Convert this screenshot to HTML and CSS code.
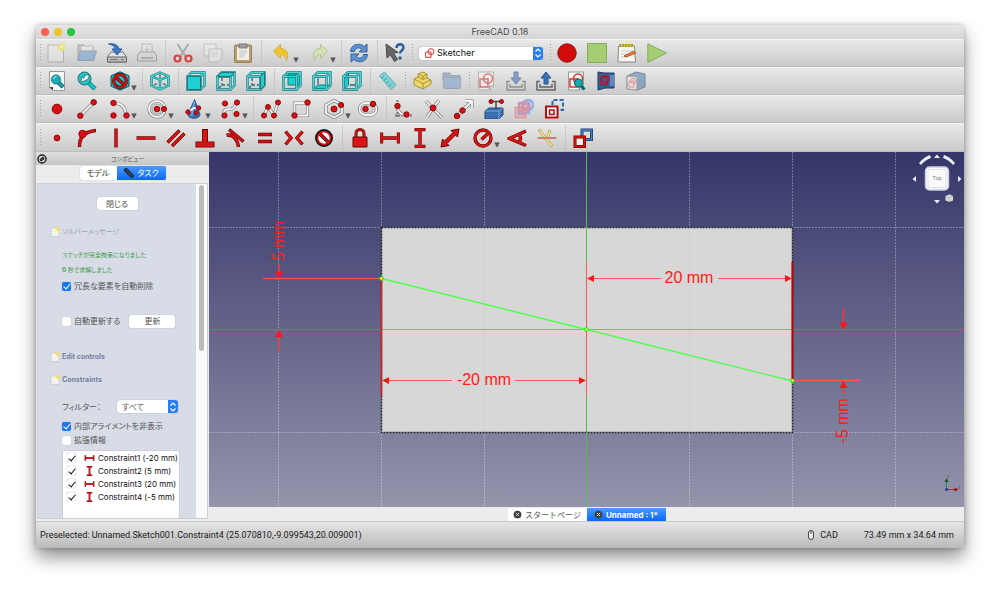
FILE: index.html
```html
<!DOCTYPE html>
<html lang="ja">
<head>
<meta charset="utf-8">
<title>FreeCAD 0.18</title>
<link rel="stylesheet" href="styles.css">
</head>
<body>
<svg class="defs" aria-hidden="true">
  <symbol id="frame" viewBox="0 0 20 20"><path class="wd" d="M1.500 5.500h13v13h-13zM1.500 5.500l4-4h13v13l-4 4M14.500 5.500l4-4"/><path class="wt" d="M1.500 5.500h13v13h-13zM1.500 5.500l4-4h13v13l-4 4M14.500 5.500l4-4"/></symbol>
  <symbol id="back" viewBox="0 0 20 20"><path class="dk" d="M6 7v3M6 12v2h3M11 14h2M3 17l2-2"/></symbol>
  <symbol id="page" viewBox="0 0 20 20"><path d="M2.500 1h15v14l-4 4h-11z" fill="#f6f6f4" stroke="#999"/><path d="M17.500 15h-4v4" fill="#ccc" stroke="#888"/></symbol>
  <symbol id="shape" viewBox="0 0 20 20"><path d="M4 8h8v8H4z" fill="none" stroke="#d33" stroke-width="1.500"/><circle cx="12" cy="7.500" r="4.500" fill="none" stroke="#d33" stroke-width="1.500"/></symbol>
  <symbol id="note" viewBox="0 0 10 10"><path d="M1 1h8v8.500H1z" fill="#f4f4ee" stroke="#c5c5bd" stroke-width=".7"/><circle cx="7.500" cy="2" r="1.900" fill="#f7e35a"/></symbol>
  <symbol id="hdim" viewBox="0 0 20 20"><path d="M1.500 4.500v11M18.500 4.500v11M2 10h16" stroke="#6b0505" stroke-width="3.400" fill="none"/><path d="M1.500 5v10M18.500 5v10M2 10h16" stroke="#d81414" stroke-width="2.200" fill="none"/></symbol>
  <symbol id="vdim" viewBox="0 0 20 20"><path d="M4.500 1.500h11M4.500 18.500h11M10 2v16" stroke="#6b0505" stroke-width="3.400" fill="none"/><path d="M5 1.500h10M5 18.500h10M10 2v16" stroke="#d81414" stroke-width="2.200" fill="none"/></symbol>
  <symbol id="updown" viewBox="0 0 10 12"><path d="M2.500 4.500L5 2l2.500 2.500M2.500 7.500L5 10l2.500-2.500" fill="none" stroke="#fff" stroke-width="1.200"/></symbol>
  <symbol id="close" viewBox="0 0 10 10"><circle cx="5" cy="5" r="4.300" fill="#3f3f3f"/><path d="M3.200 3.200l3.600 3.600M6.800 3.200L3.200 6.800" stroke="#ddd" stroke-width="1.100"/></symbol>
</svg>

<div class="window">
  <header class="titlebar">
    <div class="lights"><button class="light red" aria-label="Close"></button><button class="light yellow" aria-label="Minimize"></button><button class="light green" aria-label="Zoom"></button></div>
    <h1>FreeCAD 0.18</h1>
  </header>

  <div class="toolbar" role="toolbar" aria-label="File">
    <i class="grip first"></i>
    <button class="tool off" aria-label="New"><svg viewBox="0 0 20 20"><path d="M1 2h15.500v17H1z" fill="#eee" stroke="#777"/><circle cx="14.500" cy="4" r="4" fill="#f8e000"/><circle cx="14.500" cy="4" r="1.500" fill="#fff"/></svg></button>
    <button class="tool off" aria-label="Open"><svg viewBox="0 0 20 20"><path d="M1 17V2h6l1 2h8v9" fill="#999" stroke="#555"/><path d="M4 3h12v9H4z" fill="#eee" stroke="#888"/><path d="M3.500 8h16l-3 9.500H1z" fill="#4683cb" stroke="#2d568e"/></svg></button>
    <button class="tool" aria-label="Save"><svg viewBox="0 0 20 20"><path d="M4 9h12l3.500 5v5H.5v-5z" fill="#e2e2e2" stroke="#777"/><path d="M.5 14h19v5H.5z" fill="#bdbdbd" stroke="#666"/><path d="M3 16.500h8M14 16.500h3" stroke="#777"/><path d="M1.500 1c7-1 10 2 10.500 5h3l-5 6-5-6h3c0-2-2-4-6.500-5z" fill="#3d7cc5" stroke="#2f5f9d"/></svg></button>
    <button class="tool off" aria-label="Print"><svg viewBox="0 0 20 20"><path d="M5 1h10v9H5z" fill="#eee" stroke="#777"/><path d="M10 3v5M7.500 6l2.500 2 2.500-2" stroke="#777" fill="none"/><path d="M3 9h14l2.500 3v6H.5v-6z" fill="#d0d0d0" stroke="#555"/><path d="M4 14h12v2H4z" fill="#777"/></svg></button>
    <i class="sep"></i>
    <button class="tool soft" aria-label="Cut"><svg viewBox="0 0 20 20"><path d="M4.500 1l8.500 13M15.500 1L7 14" stroke="#999" stroke-width="2"/><circle cx="4.500" cy="15.500" r="3" fill="none" stroke="#d11" stroke-width="2.200"/><circle cx="15.500" cy="15.500" r="3" fill="none" stroke="#d11" stroke-width="2.200"/></svg></button>
    <button class="tool off" aria-label="Copy"><svg viewBox="0 0 20 20"><path d="M1 1h12v12H1z" fill="#eee" stroke="#999"/><path d="M6 6h13v9l-4 4H6z" fill="#f5f5f5" stroke="#888"/><path d="M8 9h8M8 11h8M8 13h6" stroke="#bbb"/></svg></button>
    <button class="tool soft" aria-label="Paste"><svg viewBox="0 0 20 20"><rect x="1.500" y="2" width="17" height="17.500" rx="1" fill="#b08a45" stroke="#806536"/><path d="M4 4h12v13H4z" fill="#f8f8f6"/><path d="M6 1h8v4H6z" fill="#888" stroke="#555"/><path d="M6 8h8M6 10h8M6 12h6M6 14h5" stroke="#bbb"/></svg></button>
    <i class="sep"></i>
    <button class="tool menu" aria-label="Undo"><svg viewBox="0 0 20 20"><path d="M1.500 8l7-6.500v4c6 0 9 5 6 12-1-4-3-6-6-6v4z" fill="#edc52e" stroke="#d5b13a"/></svg><b>▼</b></button>
    <button class="tool menu" aria-label="Redo"><svg class="dim" viewBox="0 0 20 20"><path d="M18.500 8l-7-6.500v4c-6 0-9 5-6 12 1-4 3-6 6-6v4z" fill="#d5e59b" stroke="#96b35e"/></svg><b>▼</b></button>
    <i class="sep"></i>
    <button class="tool" aria-label="Refresh"><svg viewBox="0 0 20 20"><path d="M1.500 8.500C2 0 12 0 15 3.500L18 1v8h-8l2.500-2.500C10 3.500 6 5 5.500 8.500zM18.500 11.500C18 20 8 20 5 16.500L2 19v-8h8l-2.500 2.500C10 16.500 14 15 14.500 11.500z" fill="#5c91cf" stroke="#3463a0"/></svg></button>
    <i class="sep"></i>
    <button class="tool" aria-label="What's this?"><svg viewBox="0 0 20 20"><path d="M1 1l12 8.500-4.500.5 4 6.500-3 2-4-6.500L2 15z" fill="#666" stroke="#4a4a4a"/><path d="M11.500 5c0-5 7-5 7-.5 0 3-3.500 3-3.500 6" fill="none" stroke="#2f5b9b" stroke-width="2.400"/><circle cx="15" cy="15" r="1.700" fill="#2f5b9b"/></svg></button>
    <i class="grip"></i>
    <label class="combo workbench"><svg class="lead" viewBox="3 2 15 15"><use href="#shape" width="20" height="20"/></svg><select aria-label="Workbench"><option>Sketcher</option></select><span class="knob"><svg viewBox="0 0 10 12"><use href="#updown"/></svg></span></label>
    <i class="grip"></i>
    <button class="tool" aria-label="Record macro"><svg viewBox="0 0 20 20"><circle cx="10" cy="10" r="9.200" fill="#d40b0b" stroke="#8c0d0d"/></svg></button>
    <button class="tool" aria-label="Stop macro"><svg viewBox="0 0 20 20"><path d="M.5.500h19v19H.5z" fill="#a3cf72" stroke="#86ab5f"/></svg></button>
    <button class="tool" aria-label="Edit macro"><svg viewBox="0 0 20 20"><path d="M1.500 3h16l1 16H1z" fill="#f4f4f0" stroke="#888"/><path d="M2.500 1h14v3h-14z" fill="#e2c23a"/><path d="M3 1v3M6 1v3M9 1v3M12 1v3M15 1v3" stroke="#776"/><path d="M4 8h11M4 11h9M4 14h5" stroke="#ccc"/><path d="M7 13l10-5 2 2-10 4z" fill="#e68a24" stroke="#b4533a"/></svg></button>
    <button class="tool" aria-label="Run macro"><svg viewBox="0 0 20 20"><path d="M.8.800L19.500 10 .8 19.200z" fill="#a3cf72" stroke="#86ab5f"/></svg></button>
  </div>

  <div class="toolbar" role="toolbar" aria-label="View">
    <i class="grip first"></i>
    <button class="tool" aria-label="Fit all"><svg viewBox="0 0 20 20"><path d="M2.500.500h15v19h-11l-4-4z" fill="#f7f7f7" stroke="#999"/><path d="M2 16h4v3.500z" fill="#444"/><path d="M11 11l5 5" stroke="#045" stroke-width="4"/><path d="M11 11l5 5" stroke="#12a9af" stroke-width="2.500"/><circle cx="9" cy="8.500" r="4.500" fill="#19aeb4" stroke="#177c80"/><path d="M6.500 8a3 3 0 013-2.500" fill="none" stroke="#bff"/></svg></button>
    <button class="tool" aria-label="Fit selection"><svg viewBox="0 0 20 20"><path d="M11 11l7 7" stroke="#0b6f75" stroke-width="4.500"/><path d="M11 11l7 7" stroke="#17c5c9" stroke-width="3"/><circle cx="7.500" cy="7.500" r="6.500" fill="#2bbcc0" stroke="#16777b"/><path d="M4 11l1-5 1.500 1.500L9 4l3 0-1 4-2 1z" fill="#fff" stroke="#355" stroke-width=".6"/></svg></button>
    <button class="tool menu" aria-label="Draw style"><svg viewBox="0 0 20 20"><path d="M10 .8l9 4v10.400l-9 4-9-4V4.800z" fill="#1cc3c6" stroke="#0b5356"/><circle cx="10" cy="10" r="6.300" fill="none" stroke="#400" stroke-width="3.200"/><path d="M5.500 6l9 8" stroke="#400" stroke-width="3.200"/><circle cx="10" cy="10" r="6.300" fill="none" stroke="#d61212" stroke-width="2"/><path d="M5.500 6l9 8" stroke="#d61212" stroke-width="2"/></svg><b>▼</b></button>
    <i class="sep"></i>
    <button class="tool" aria-label="Isometric"><svg viewBox="0 0 20 20"><path class="wd" d="M10 1.500l8.500 3.700v9.600L10 18.500l-8.500-3.700V5.200zM1.500 5.200L10 9l8.500-3.800M10 9v9.500"/><path class="wt" d="M10 1.500l8.500 3.700v9.600L10 18.500l-8.500-3.700V5.200zM1.500 5.200L10 9l8.500-3.800M10 9v9.500"/><path class="dk" d="M10 3v4M4 14l3-1.500M16 14l-3-1.500"/></svg></button>
    <i class="sep"></i>
    <button class="tool" aria-label="Front"><svg viewBox="0 0 20 20"><use href="#frame"/><path class="face" d="M1.500 5.500h13v13h-13z"/></svg></button>
    <button class="tool" aria-label="Top"><svg viewBox="0 0 20 20"><use href="#back"/><use href="#frame"/><path class="face" d="M1.500 5.500l4-4h13l-4 4z"/></svg></button>
    <button class="tool" aria-label="Right"><svg viewBox="0 0 20 20"><use href="#back"/><use href="#frame"/><path class="face" d="M14.500 5.500l4-4v13l-4 4z"/></svg></button>
    <i class="sep"></i>
    <button class="tool" aria-label="Rear"><svg viewBox="0 0 20 20"><path class="face" d="M6 3h12v11H6z"/><use href="#frame"/></svg></button>
    <button class="tool" aria-label="Bottom"><svg viewBox="0 0 20 20"><path class="face" d="M1.500 18.500l4-4.500h13l-4 4.500z"/><path class="dk" d="M6 7v6"/><use href="#frame"/></svg></button>
    <button class="tool" aria-label="Left"><svg viewBox="0 0 20 20"><path class="face" d="M1.500 5.500l5-4v12.500l-5 4.500z"/><path class="dk" d="M8 14h5"/><use href="#frame"/></svg></button>
    <i class="sep"></i>
    <button class="tool" aria-label="Measure"><svg viewBox="0 0 20 20"><path d="M1.500 5l5-4L18 14l-5 4.500z" fill="#79d3d6" stroke="#5aaeb1"/><path d="M4 7l2-1.500M6 9.500L8.500 7.500M8.500 12l2-1.500M11 15l2.500-2" stroke="#4a9699"/></svg></button>
    <i class="grip"></i>
    <button class="tool" aria-label="Part"><svg viewBox="0 0 20 20"><path d="M2 8l4-2V3l5-2 4 2v4l4 2v4l-8 5-9-4z" fill="#ecd968" stroke="#a8933a"/><path d="M6 6l5 2.500 4-2M2 8l9 4.500 8-3.500M11 12.500V18M6 3l5 2.500 4-2.500M11 5.500v3" fill="none" stroke="#a8933a"/></svg></button>
    <button class="tool" aria-label="Group"><svg class="dim" viewBox="0 0 20 20"><path d="M1 2h7l1 2.500h9V9H1z" fill="#8195b0" stroke="#6d7f99"/><path d="M1 6.500h18l-1 11H2z" fill="#7fa3cf" stroke="#7087a5"/></svg></button>
    <i class="grip"></i>
    <button class="tool" aria-label="New sketch"><svg class="dim" viewBox="0 0 20 20"><use href="#page"/><use href="#shape"/></svg></button>
    <button class="tool" aria-label="Edit sketch"><svg class="dim" viewBox="0 0 20 20"><path d="M4 10.500H1v8.500h18v-8.500h-3M4 13v3h12v-3" fill="none" stroke="#666" stroke-width="1.500"/><path d="M8 1h4v6h3l-5 6-5-6h3z" fill="#3f74b5" stroke="#264f85"/></svg></button>
    <button class="tool" aria-label="Leave sketch"><svg viewBox="0 0 20 20"><path d="M4 10.500H1v8.500h18v-8.500h-3M4 13v3h12v-3" fill="none" stroke="#666" stroke-width="1.500"/><path d="M8 13h4V7h3l-5-6-5 6h3z" fill="#3b73b8" stroke="#2b548c"/></svg></button>
    <button class="tool" aria-label="View sketch"><svg viewBox="0 0 20 20"><use href="#page"/><use href="#shape"/><path d="M14 14l4.500 4.500" stroke="#066" stroke-width="3"/><circle cx="12.500" cy="12" r="4" fill="#18aab0" stroke="#066"/></svg></button>
    <button class="tool" aria-label="View section"><svg viewBox="0 0 20 20"><path d="M2 1l6 1h10v15H9l-7 2z" fill="#35629f" stroke="#1b375f"/><path d="M14 4h4v11h-4z" fill="#5b88c3"/><path d="M5 6h6v8H5z" fill="none" stroke="#b31528" stroke-width="1.300"/><circle cx="9.500" cy="8" r="3.500" fill="none" stroke="#b31528" stroke-width="1.300"/></svg></button>
    <button class="tool" aria-label="Map sketch"><svg class="dim" viewBox="0 0 20 20"><path d="M1 5l9-4 9 2v13l-8 3-10-1z" fill="#5a85bd" stroke="#355"/><path d="M1 5l10 1v13l-10-1z" fill="#f0e9e9" stroke="#777"/><path d="M3 10h5v6H3z" fill="none" stroke="#d66"/><circle cx="7" cy="10" r="2.500" fill="none" stroke="#d66"/></svg></button>
  </div>

  <div class="toolbar" role="toolbar" aria-label="Sketch geometry">
    <i class="grip first"></i>
    <button class="tool" aria-label="Point"><svg viewBox="0 0 20 20"><circle class="ball" cx="10" cy="10" r="4.800"/></svg></button>
    <button class="tool" aria-label="Line"><svg viewBox="0 0 20 20"><path class="o" d="M3 17L17 3"/><path class="n" d="M3 17L17 3"/><circle class="ball" cx="3.300" cy="16.700" r="2.700"/><circle class="ball" cx="16.700" cy="3.300" r="2.700"/></svg></button>
    <button class="tool menu" aria-label="Arc"><svg viewBox="0 0 20 20"><path class="o" d="M4 4q11 0 12 12"/><path class="n" d="M4 4q11 0 12 12"/><circle class="ball" cx="3.500" cy="4" r="2.700"/><circle class="ball" cx="3.500" cy="16.500" r="2.700"/><circle class="ball" cx="16.500" cy="16.500" r="2.700"/></svg><b>▼</b></button>
    <button class="tool menu" aria-label="Circle"><svg viewBox="0 0 20 20"><circle class="o" cx="10" cy="10" r="8"/><circle class="n" cx="10" cy="10" r="8"/><circle cx="10" cy="10" r="5" fill="none" stroke="#888" stroke-width=".7"/><circle class="ball" cx="10" cy="10" r="2.800"/><circle class="ball" cx="17" cy="10" r="2.500"/></svg><b>▼</b></button>
    <button class="tool menu" aria-label="Conic"><svg viewBox="0 0 20 20"><path d="M10.500 .5l5.500 15c0 5-12 5-12 0z" fill="#3c6dae" stroke="#2d5288"/><path d="M10.500 2l-3 15" stroke="#7fa8dc" stroke-width="1.500"/><path d="M5 13q5-6 9-3" fill="none" stroke="#eee" stroke-width="2"/><circle class="ball" cx="4" cy="13" r="2.200"/><circle class="ball" cx="14.500" cy="9" r="2.200"/><circle class="ball" cx="12" cy="14" r="1.800"/></svg><b>▼</b></button>
    <button class="tool menu" aria-label="B-spline"><svg viewBox="0 0 20 20"><path class="o" d="M3 16C2 8 8 11 11 10s3-5 5-6"/><path class="n" d="M3 16C2 8 8 11 11 10s3-5 5-6"/><circle class="ball" cx="4" cy="4.500" r="2.600"/><circle class="ball" cx="16" cy="3.500" r="2.600"/><circle class="ball" cx="3.500" cy="16.500" r="2.600"/><circle class="ball" cx="15.500" cy="15" r="2.600"/></svg><b>▼</b></button>
    <i class="sep"></i>
    <button class="tool" aria-label="Polyline"><svg viewBox="0 0 20 20"><path class="o" d="M3 16l4-8 6 8 4-12"/><path class="n" d="M3 16l4-8 6 8 4-12"/><circle class="ball" cx="3" cy="16.500" r="2.500"/><circle class="ball" cx="7" cy="8" r="2.500"/><circle class="ball" cx="13" cy="16.500" r="2.500"/><circle class="ball" cx="17" cy="3.500" r="2.500"/></svg></button>
    <button class="tool" aria-label="Rectangle"><svg viewBox="0 0 20 20"><path class="o" d="M3.500 4h13v12.500h-13z"/><path class="n" d="M3.500 4h13v12.500h-13z"/><circle class="ball" cx="3.500" cy="16.500" r="2.700"/><circle class="ball" cx="16.500" cy="3.500" r="2.700"/></svg></button>
    <button class="tool menu" aria-label="Polygon"><svg viewBox="0 0 20 20"><path class="o" d="M10 1.500l8 4.500v8l-8 4.500L2 14V6z"/><path class="n" d="M10 1.500l8 4.500v8l-8 4.500L2 14V6z"/><circle class="ball" cx="10" cy="10" r="3"/><circle class="ball" cx="17" cy="6" r="2.600"/></svg><b>▼</b></button>
    <button class="tool" aria-label="Slot"><svg viewBox="0 0 20 20"><rect class="o" x="1.500" y="4" width="17" height="12" rx="6"/><rect class="n" x="1.500" y="4" width="17" height="12" rx="6"/><rect x="5" y="7" width="10" height="6" rx="3" fill="none" stroke="#999" stroke-width=".7"/><circle class="ball" cx="7.500" cy="10" r="2.700"/><circle class="ball" cx="15" cy="5" r="2.700"/></svg></button>
    <i class="sep"></i>
    <button class="tool" aria-label="Fillet"><svg viewBox="0 0 20 20"><path d="M3.500 1v18M1 16.500h18" stroke="#777" stroke-width="2" stroke-dasharray="2 1"/><path class="o" d="M3.500 8q1 8 9 8"/><path class="n" d="M3.500 8q1 8 9 8"/><circle class="ball" cx="3.500" cy="7" r="2.700"/><circle class="ball" cx="12.500" cy="15.500" r="2.700"/></svg></button>
    <button class="tool" aria-label="Trim"><svg viewBox="0 0 20 20"><path class="o" d="M2 2l16 17M15 1L3 18"/><path class="n" d="M2 2l16 17M15 1L3 18"/><circle class="ball" cx="9" cy="9" r="2.900"/></svg></button>
    <button class="tool" aria-label="Extend"><svg viewBox="0 0 20 20"><path class="o" d="M3 17L18 2M11 2h7v7"/><path class="n" d="M3 17L18 2M11 2h7v7"/><circle class="ball" cx="3" cy="17" r="2.700"/><circle class="ball" cx="8.500" cy="11.500" r="2.700"/></svg></button>
    <button class="tool" aria-label="External geometry"><svg viewBox="0 0 20 20"><path d="M1 12l4-3h14v7l-4 4H1z" fill="#3a6eb0" stroke="#234673"/><path d="M1 12h14v8M15 12l4-3" fill="none" stroke="#7aa4d6"/><path d="M12 2v8M7 2.500h10" stroke="#444" stroke-width="1.500"/><circle class="ball" cx="7" cy="2.500" r="2"/><circle class="ball" cx="17.500" cy="2.500" r="2"/></svg></button>
    <button class="tool" aria-label="Carbon copy"><svg viewBox="0 0 20 20"><g fill="none" stroke="#8db0ef" stroke-width="2.500"><path d="M5 4h10v10H5z"/><circle cx="14" cy="6" r="5"/></g><g fill="none" stroke="#e18e96" stroke-width="1.500"><path d="M1.500 8.500h10v10h-10z"/><path d="M4 11h5v5H4z"/><circle cx="10.500" cy="8" r="5.500"/><circle cx="10.500" cy="8" r="2.800"/></g></svg></button>
    <button class="tool" aria-label="Construction mode"><svg viewBox="0 0 20 20"><path d="M8.500 6V1h10.500v10h-5" fill="none" stroke="#2f68b0" stroke-width="2" stroke-dasharray="4 2"/><path d="M2 7.500h11.500v11H2z" fill="#fff" stroke="#b01010" stroke-width="2"/><path d="M5.500 11h4.500v4.500H5.500z" fill="#eee" stroke="#b01010" stroke-width="1.500"/></svg></button>
  </div>

  <div class="toolbar last" role="toolbar" aria-label="Sketch constraints">
    <i class="grip first"></i>
    <div class="tools wide">
    <button class="tool" aria-label="Coincident"><svg viewBox="0 0 20 20"><circle class="ball" cx="10" cy="10" r="2.900"/></svg></button>
    <button class="tool" aria-label="Point on object"><svg viewBox="0 0 20 20"><path class="rd" d="M2.500 19Q2 4 19 2.500"/><path class="rr" d="M2.500 18.500Q2 4 18.500 2.500"/><circle class="ball" cx="5.500" cy="6" r="3.700"/></svg></button>
    <button class="tool" aria-label="Vertical"><svg viewBox="0 0 20 20"><path class="rd" d="M10 .5v19"/><path class="rr" d="M10 1v18"/></svg></button>
    <button class="tool" aria-label="Horizontal"><svg viewBox="0 0 20 20"><path class="rd" d="M.5 10h19"/><path class="rr" d="M1 10h18"/></svg></button>
    <button class="tool" aria-label="Parallel"><svg viewBox="0 0 20 20"><path class="rd" d="M1.500 14.500l12-12M6 18L18.500 5.500"/><path class="rr" d="M2 14l11-11M6.500 17.500L18 6"/></svg></button>
    <button class="tool" aria-label="Perpendicular"><svg viewBox="0 0 20 20"><path class="th" d="M10 1v15M.5 16.500h19"/><path class="ti" d="M10 2v14M1.500 16.500h17"/></svg></button>
    <button class="tool" aria-label="Tangent"><svg viewBox="0 0 20 20"><path class="rd" d="M4 1.500l14.500 12M1.500 7q10-1 12 12"/><path class="rr" d="M4.500 2l13.500 11M2 7q9-1 11.500 11.500"/></svg></button>
    <button class="tool" aria-label="Equal"><svg viewBox="0 0 20 20"><path class="rd" d="M3 6.500h14M3 13.500h14"/><path class="rr" d="M3.500 6.500h13M3.500 13.500h13"/></svg></button>
    <button class="tool" aria-label="Symmetric"><svg viewBox="0 0 20 20"><path class="rd" d="M1.500 3.500L7 10l-5.500 6.500M18.500 3.500L13 10l5.500 6.500"/><path class="rr" d="M2 4l5 6-5 6M18 4l-5 6 5 6"/></svg></button>
    <button class="tool" aria-label="Block"><svg viewBox="0 0 20 20"><circle cx="10" cy="10" r="7.500" fill="#fff" stroke="#111" stroke-width="3"/><path d="M5 5l10 10" stroke="#111" stroke-width="3.500"/><circle cx="10" cy="10" r="6.500" fill="none" stroke="#d11" stroke-width="1.600"/><path d="M5.500 5.500l9 9" stroke="#d11" stroke-width="2"/></svg></button>
    </div>
    <i class="sep"></i>
    <button class="tool" aria-label="Lock"><svg viewBox="0 0 20 20"><path d="M6 10V5.500a4 4 0 018 0V10" fill="none" stroke="#6b0505" stroke-width="3"/><path d="M6 10V5.500a4 4 0 018 0V10" fill="none" stroke="#c11" stroke-width="1.700"/><path d="M3 9h14v10H3z" fill="#d81414" stroke="#6b0505"/></svg></button>
    <button class="tool" aria-label="Horizontal distance"><svg viewBox="0 0 20 20"><use href="#hdim"/></svg></button>
    <button class="tool" aria-label="Vertical distance"><svg viewBox="0 0 20 20"><use href="#vdim"/></svg></button>
    <button class="tool" aria-label="Distance"><svg viewBox="0 0 20 20"><path d="M1 19l1.500-8 2 2L13 4.500l-2-2 8-1.500-1.500 8-2-2L7 15.500l2 2z" fill="#d81414" stroke="#6b0505"/></svg></button>
    <button class="tool menu" aria-label="Radius"><svg viewBox="0 0 20 20"><circle class="rd" cx="10" cy="10" r="8"/><circle class="rr" cx="10" cy="10" r="8"/><path class="rd" d="M8.500 11.500L14.500 6"/><path class="rr" d="M8.500 11.500L14.500 6"/></svg><b>▼</b></button>
    <button class="tool" aria-label="Angle"><svg viewBox="0 0 20 20"><path class="rd" d="M19 3L2.500 10.500 19 17.500M12 6.500q3 4 0 7.500"/><path class="rr" d="M18.500 3L2.500 10.500l16 6.500M12 6.500q3 4 0 7.500"/></svg></button>
    <button class="tool" aria-label="Snell's law"><svg viewBox="0 0 20 20"><path d="M2 1.500L15 18.500M10 11l3-9" stroke="#b3a561" stroke-width="3" fill="none"/><path d="M2.500 2L14.500 18M10 11l3-8.500" stroke="#eee08c" stroke-width="1.800" fill="none"/><path d="M.5 10h19" stroke="#c96262" stroke-width="1.500"/></svg></button>
    <i class="sep"></i>
    <button class="tool" aria-label="Toggle reference"><svg viewBox="0 0 20 20"><path d="M9 2h9.500v9.500H9z" fill="none" stroke="#173e70" stroke-width="3"/><path d="M9 2h9.500v9.500H9z" fill="none" stroke="#4b7fc0" stroke-width="1.500"/><path d="M2 9h9.500v9.500H2z" fill="#eee" stroke="#700" stroke-width="3"/><path d="M2 9h9.500v9.500H2z" fill="none" stroke="#d81414" stroke-width="1.700"/></svg></button>
  </div>

  <main class="work">
    <aside class="dock">
      <div class="dock-title"><button class="plain" aria-label="Close panel"><svg viewBox="0 0 10 10"><circle cx="5" cy="5" r="4" fill="#ddd" stroke="#222" stroke-width="1.500"/><path d="M3 5.500l3-2.500 1 2-3 2z" fill="#555" stroke="#111"/></svg></button><span>コンボビュー</span></div>
      <div class="tabs" role="tablist"><button role="tab">モデル</button><button role="tab" class="active" aria-selected="true"><svg viewBox="0 0 12 10"><path d="M1.500 1L4 .5l6.500 7-.5 1.500-2 .5L1.500 3z" fill="#34404e" stroke="#18232f"/></svg>タスク</button></div>
      <div class="frame">
        <div class="task">
          <button class="btn closebtn">閉じる</button>
          <h2 class="jp"><svg viewBox="0 0 10 10"><use href="#note"/></svg>ソルバーメッセージ</h2>
          <p class="msg">スケッチが完全拘束になりました</p>
          <p class="msg second"><b>0</b> 秒で求解しました</p>
          <label class="check"><input type="checkbox" checked>冗長な要素を自動削除</label>
          <div class="update"><label class="check"><input type="checkbox">自動更新する</label><button class="btn">更新</button></div>
          <h2><svg viewBox="0 0 10 10"><use href="#note"/></svg>Edit controls</h2>
          <h2 class="con"><svg viewBox="0 0 10 10"><use href="#note"/></svg>Constraints</h2>
          <div class="filter"><label for="filter">フィルター：</label><span class="combo"><select id="filter"><option>すべて</option></select><span class="knob"><svg viewBox="0 0 10 12"><use href="#updown"/></svg></span></span></div>
          <label class="check"><input type="checkbox" checked>内部アライメントを非表示</label>
          <label class="check"><input type="checkbox">拡張情報</label>
          <ul class="list">
            <li><label><input type="checkbox" checked><svg viewBox="0 0 20 20"><use href="#hdim"/></svg>Constraint1 (-20 mm)</label></li>
            <li><label><input type="checkbox" checked><svg viewBox="0 0 20 20"><use href="#vdim"/></svg>Constraint2 (5 mm)</label></li>
            <li><label><input type="checkbox" checked><svg viewBox="0 0 20 20"><use href="#hdim"/></svg>Constraint3 (20 mm)</label></li>
            <li><label><input type="checkbox" checked><svg viewBox="0 0 20 20"><use href="#vdim"/></svg>Constraint4 (-5 mm)</label></li>
          </ul>
        </div>
        <div class="scroll"><i></i></div>
      </div>
    </aside>

    <section class="viewer">
      <div class="scene">
      <svg viewBox="209 152 755 355" preserveAspectRatio="xMidYMid slice" role="img" aria-label="Sketch view">
        <path class="grid" d="M278.500 152v355M381.500 152v355M484.500 152v355M689.500 152v355M792.500 152v355M895.500 152v355M209 227.500h755M209 432.500h755"/>
        <path d="M381.500 227.500h411v205h-411z" fill="#d7d7d7"/>
        <path class="grid in" d="M484.500 228v204M689.500 228v204"/>
        <path class="edge" d="M381.500 227.500h411v205h-411z"/>
        <path d="M586.500 152v355" stroke="#4cc04c"/>
        <path d="M209 329.500h172M793 329.500h171" stroke="#c0566c"/>
        <path d="M382 329.500h410" stroke="#f47c7c"/>
        <path d="M586.500 262v134M263 278.500h118M792 380.500h68" stroke="#f55"/>
        <path d="M381.500 279v117" stroke="#e02020" stroke-width="1.500"/>
        <path d="M792.500 262v118" stroke="#b00a0a" stroke-width="2"/>
        <path d="M588 278.500h73M718 278.500h73M383 380.500h69M515 380.500h70" stroke="#f55"/>
        <path d="M279 264v14M279 331v21M843.500 308v20M843.500 382v12" stroke="#f33" stroke-width="1.500"/>
        <path class="arrow" d="M587 278.500l7-3.500v7zM792 278.500l-7-3.500v7zM382 380.500l7-3.500v7zM586 380.500l-7-3.500v7zM279 278.500l-4-7h8zM279 330l-4 7h8zM843.500 329.500l-4-7h8zM843.500 381l-4 7h8z"/>
        <path d="M381.500 278.500L586.500 329.500 792.500 381" fill="none" stroke="#4bff4b" stroke-width="1.300"/>
        <g fill="#22dd22"><circle cx="381.500" cy="278.500" r="2.300"/><circle cx="586.500" cy="329.500" r="2.300"/><circle cx="792.500" cy="381" r="2.300"/></g>
        <g fill="#ff3"><circle cx="381.500" cy="278.500" r="1.200"/><circle cx="586.500" cy="329.500" r="1.200"/><circle cx="792.500" cy="380.500" r="1.200"/></g>
        <g class="dims"><text x="689" y="283">20 mm</text><text x="484" y="385">-20 mm</text><text transform="translate(284 241) rotate(-90)">5 mm</text><text transform="translate(848 421) rotate(-90)">-5 mm</text></g>
        <g fill="#e8edf4">
          <path d="M919 163q5-6 11-8l1 3q-6 2-10 7zM955 163q-5-6-11-8l-1 3q6 2 10 7z"/>
          <path d="M934 158l3-3.500 3 3.500zM934 200l3 3.500 3-3.500zM916 176v6l-3.500-3zM958 176v6l3.500-3z"/>
        </g>
        <rect x="925.500" y="167" width="23" height="23" rx="4" fill="#fafafa" stroke="#c9d0e4" stroke-width="1.500"/>
        <path d="M928 169.500h18v18h-18z" fill="none" stroke="#ccd" stroke-dasharray="1 1"/>
        <text class="top" x="937" y="180">Top</text>
        <path d="M945.500 196l4-1.800 3.500 1.800v4.500l-3.500 1.500-4-1.500z" fill="#d8d8d4"/><path d="M945.500 196l4 1.500 3.500-1.500M949.500 197.500v4.500" fill="none" stroke="#aaa" stroke-width=".6"/><path d="M955 196h3l-1.500 2z" fill="#444"/>
        <path d="M946.500 489v-10" stroke="#228a3b"/><path d="M944.500 482l2-4 2 4z" fill="#145a28"/><path d="M946.500 489.500h10" stroke="#a33"/><path d="M954.500 487.500l4 2-4 2z" fill="#911"/><circle cx="946.500" cy="489.500" r="1.500" fill="#113a99"/><text class="axis" x="947" y="478">y</text><text class="axis" x="958" y="489">x</text>
      </svg>
      </div>
      <div class="docs" role="tablist"><button role="tab"><svg viewBox="0 0 10 10"><use href="#close"/></svg>スタートページ</button><button role="tab" class="active" aria-selected="true"><svg viewBox="0 0 10 10"><use href="#close"/></svg>Unnamed : 1*</button></div>
    </section>
  </main>

  <footer class="status">
    <span class="pre">Preselected: Unnamed.Sketch001.Constraint4 (25.070810,-9.099543,20.009001)</span>
    <button class="plain nav"><svg viewBox="0 0 8 12"><rect x="1.500" y="1.500" width="5" height="9" rx="2.500" fill="#eee" stroke="#444"/><path d="M4 2v3" stroke="#444"/></svg>CAD</button>
    <span>73.49 mm x 34.64 mm</span>
  </footer>
</div>
</body>
</html>
```
FILE: styles.css
```css
* { box-sizing: border-box; }
body {
  margin: 0;
  min-height: 100vh;
  padding: 25px 36px 47px;
  display: flex;
  background: #fff;
  color: #1a1a1a;
  font: 9px/12px Inter, "Noto Sans CJK JP", sans-serif;
}
button, select, input { font: inherit; color: inherit; margin: 0; }
button { border: 0; padding: 0; background: none; }
.defs { position: absolute; width: 0; height: 0; }
svg { display: block; flex: none; }

.window {
  flex: 1;
  min-width: 0;
  display: flex;
  flex-direction: column;
  border-radius: 4px;
  overflow: hidden;
  background: #ececec;
  box-shadow: 0 9px 18px rgba(0,0,0,.45), 0 0 4px rgba(0,0,0,.25);
}
.titlebar {
  height: 14px;
  display: grid;
  grid-template-columns: 1fr auto 1fr;
  align-items: center;
  padding: 0 5px;
  background: linear-gradient(#e6e6e6, #d5d5d5);
}
.titlebar h1 { margin: 0; font-size: 9px; line-height: 14px; font-weight: 400; color: #4a4a4a; }
.lights { display: flex; gap: 5px; }
.light { width: 8px; height: 8px; border-radius: 50%; }
.red { background: #fb5f57; }
.yellow { background: #efc52c; }
.green { background: #24c63f; }

.toolbar {
  height: 28px;
  display: flex;
  align-items: center;
  background: linear-gradient(#e8e8e8, #cbcbcb);
  border-top: 1px solid #f4f4f4;
  border-bottom: 1px solid #bdbdbd;
}
.toolbar.last { height: 29px; }
.tools { display: flex; }
.tools.wide { width: 297px; }
.tools .tool { flex: 1; }
.grip {
  flex: none;
  width: 4px;
  height: 18px;
  background: repeating-linear-gradient(#a6a6a6 0 1px, transparent 1px 3px) center / 1px 100% no-repeat;
}
.grip.first { margin: 0 0 0 2px; }
.sep { flex: none; width: 6px; height: 26px; background: repeating-linear-gradient(#b5b5b5 0 1px, transparent 1px 2px) center / 1px 100% no-repeat; }
.tool { width: 30px; height: 26px; display: flex; align-items: center; justify-content: center; }
.tool svg { width: 20px; height: 20px; }
.tool.off svg { opacity: .4; }
.tool.soft svg { opacity: .75; }
svg.dim { opacity: .6; }
.tool.menu { width: 37px; gap: 1px; padding-left: 6px; }
.tool b { align-self: flex-end; font: 7px/12px "DejaVu Sans", sans-serif; color: #555; }

.wd, .wt, .dk, .o, .n, .rd, .rr, .th, .ti { fill: none; }
.wd { stroke: #1f7679; stroke-width: 2.4px; }
.wt { stroke: #45d6d9; stroke-width: 1.2px; }
.dk { stroke: #256d70; stroke-width: 1.3px; }
.face { fill: #1fd0d3; stroke: #1f7679; stroke-width: 1px; }
.o { stroke: #808080; stroke-width: 3.2px; }
.n { stroke: #f4f4f4; stroke-width: 1.8px; }
.ball { fill: #dc0f12; stroke: #870b0d; stroke-width: 1px; }
.rd { stroke: #6b0505; stroke-width: 3.4px; }
.rr { stroke: #d81414; stroke-width: 2.2px; }
.th { stroke: #6b0505; stroke-width: 6px; }
.ti { stroke: #d81414; stroke-width: 4.4px; }

.combo {
  display: flex;
  align-items: center;
  height: 13px;
  border-radius: 3px;
  background: #fff;
  box-shadow: 0 0 1px rgba(0,0,0,.5);
  overflow: hidden;
}
.combo select { flex: 1; min-width: 0; height: 13px; padding: 0 2px; border: 0; background: none; appearance: none; line-height: 12px; }
.combo svg { width: 10px; height: 12px; }
.combo .lead { width: 10px; height: 10px; margin: 0 2px 0 6px; }
.knob { background: #2a7ef5; height: 100%; display: flex; align-items: center; }
.workbench { width: 124px; margin: 0 5px; color: #111; }
.workbench select { padding: 0; }

.work { flex: 1; display: flex; min-height: 369px; }
.dock { width: 173px; flex: none; display: flex; flex-direction: column; background: #ececec; font-size: 8px; color: #555; font-feature-settings: "palt"; }
.dock-title { display: grid; grid-template-columns: 10px 1fr; align-items: center; height: 13px; padding: 0 1px; background: linear-gradient(#e0e0e0, #c6c6c6); font-size: 6px; text-align: center; }
.dock-title svg { width: 10px; height: 10px; }
.tabs { display: flex; justify-content: center; height: 18px; padding: 1px 0 3px; }
.tabs button { width: 37px; background: #fff; border-radius: 2px 0 0 2px; box-shadow: 0 0 1px rgba(0,0,0,.4); color: #333; }
.tabs .active, .docs .active { background: linear-gradient(#4a9bff, #0a68f5); color: #fff; }
.tabs .active { width: 49px; display: flex; align-items: center; justify-content: center; gap: 2px; border-radius: 0 2px 2px 0; }
.tabs svg { width: 12px; height: 10px; }
.frame { flex: 1; min-height: 0; display: flex; margin: 0 1px 2px; border: 1px solid #cfcfcf; background: #fafafa; }
.task { flex: 1; display: flex; flex-direction: column; align-items: flex-start; background: #d7dce6; padding: 13px 16px 0 12px; }
.scroll { width: 12px; padding: 1px 3px; }
.scroll i { display: block; width: 5px; height: 166px; border-radius: 3px; background: #bcbcbc; }
.btn { height: 13px; border-radius: 2px; background: #fff; box-shadow: 0 0 1px rgba(0,0,0,.45); }
.closebtn { width: 41px; align-self: center; margin: 0 0 16px 4px; }
.task h2 { display: flex; align-items: center; gap: 2px; margin: 0 0 11px; font-size: 7px; line-height: 12px; font-weight: 700; color: #7381a3; }
.task h2.jp { font-weight: 300; }
.task h2 svg { width: 10px; height: 10px; }
.task h2.con { margin-bottom: 14px; }
.msg { margin: 0 0 3px 12px; font-size: 6px; line-height: 12px; color: #3f9a4c; }
.msg.second { margin-bottom: 3px; }
.check { display: flex; align-items: center; gap: 3px; height: 14px; margin-left: 12px; white-space: nowrap; }
input[type=checkbox] { appearance: none; width: 9px; height: 9px; border-radius: 2px; background: #fff; box-shadow: 0 0 1px rgba(0,0,0,.3); display: grid; place-items: center; }
input[type=checkbox]:checked { background: #1a78f2; }
input[type=checkbox]:checked::after { content: ""; width: 3px; height: 6px; margin-bottom: 1px; border: solid #fff; border-width: 0 1px 1px 0; transform: rotate(40deg); }
.update { display: flex; align-items: center; gap: 9px; margin: 21px 0 23px; }
.update .btn { width: 46px; }
.filter { display: flex; align-items: center; justify-content: space-between; width: 116px; height: 13px; margin: 0 0 6px 12px; }
.filter .combo { width: 61px; }
.filter select { padding-left: 5px; }
.list { flex: 1; width: 118px; margin: 3px 0 0 12px; padding: 0; list-style: none; background: #fff; border: 1px solid #ccd; border-bottom: 0; color: #111; }
.list label { display: flex; align-items: center; height: 13px; white-space: nowrap; }
.list input[type=checkbox] { margin: 0 8px 0 4px; }
.list input[type=checkbox]:checked { background: #fff; box-shadow: 0 0 1px rgba(0,0,0,.6); }
.list input[type=checkbox]:checked::after { border-color: #111; }
.list svg { width: 11px; height: 10px; margin-right: 3px; }

.viewer { flex: 1; min-width: 0; display: flex; flex-direction: column; }
.scene { flex: 1; min-height: 355px; background: linear-gradient(#353569, #9494ac); }
.scene svg { width: 100%; height: 100%; }
.grid { fill: none; stroke: #fff; stroke-opacity: .3; stroke-dasharray: 2 1; }
.grid.in { stroke: #999; stroke-dasharray: 1 2; }
.edge { fill: none; stroke: #222; stroke-width: 1.5px; stroke-dasharray: 2 1; }
.arrow { fill: #ff1414; }
.dims { font: 16px "Liberation Sans", Arial, sans-serif; fill: #ff1a12; text-anchor: middle; }
.top { font: 5px Inter, sans-serif; fill: #777; text-anchor: middle; }
.axis { font: 4px Inter, sans-serif; fill: #555; }
.docs { display: flex; justify-content: center; height: 14px; padding: 1px 0 0; background: #ececec; }
.docs button { display: flex; align-items: center; justify-content: center; gap: 3px; width: 79px; height: 13px; background: #fff; color: #555; font-size: 8px; }
.docs .active { color: #fff; font-weight: 700; }
.docs svg { width: 9px; height: 9px; }

.status { display: flex; align-items: center; height: 27px; padding: 0 10px 0 4px; border-top: 1px solid #c6c6c6; background: linear-gradient(#e6e6e6, #bababa); font-family: Roboto, sans-serif; }
.pre { flex: 1; }
.plain { display: flex; align-items: center; }
.nav { gap: 5px; margin-right: 26px; }
.nav svg { width: 8px; height: 12px; }
```
